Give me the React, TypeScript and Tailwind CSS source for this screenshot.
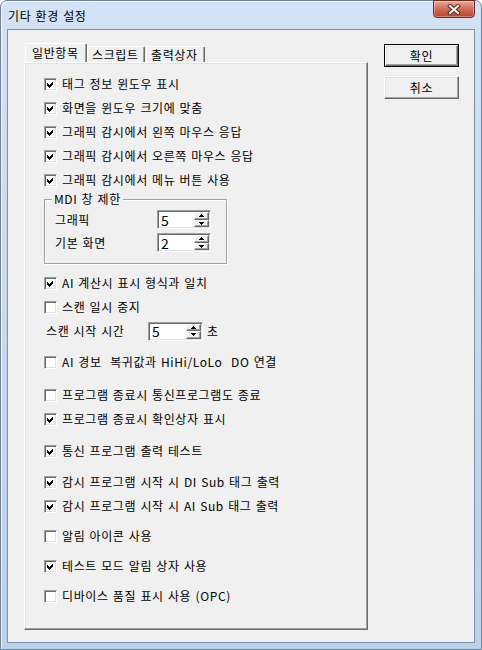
import React from "react";

const font = "font-['Noto_Sans_CJK_KR',_'Noto_Sans',_sans-serif] tracking-[0.6px] [word-spacing:1px]";

const Check = ({ checked }: { checked?: boolean }) => (
  <span className="flex h-[13px] w-[13px] shrink-0 items-center justify-center border border-t-[#a0a0a0] border-l-[#a0a0a0] border-b-white border-r-white bg-white shadow-[inset_1px_1px_0_#696969,inset_-1px_-1px_0_#e3e3e3]">
    {checked && (
      <svg width="9" height="9" viewBox="0 0 9 9" shapeRendering="crispEdges">
        <polygon points="1,3 3,5 7,1 7,4 3,8 1,6" fill="#000" />
      </svg>
    )}
  </span>
);

const Row = ({
  checked,
  label,
  className = "",
}: {
  checked?: boolean;
  label: string;
  className?: string;
}) => (
  <div className={`flex h-[24px] items-center ${className}`}>
    <Check checked={checked} />
    <span className="ml-[5px] whitespace-pre text-[12px] leading-[14px] text-black">{label}</span>
  </div>
);

const Arrow = ({ up }: { up?: boolean }) => (
  <svg width="5" height="3" viewBox="0 0 5 3" shapeRendering="crispEdges">
    {up ? <polygon points="2.5,0 5,3 0,3" fill="#000" /> : <polygon points="0,0 5,0 2.5,3" fill="#000" />}
  </svg>
);

const Spin = ({ value, width }: { value: string; width: string }) => (
  <div
    className={`flex h-[19px] ${width} border border-t-[#a0a0a0] border-l-[#a0a0a0] border-b-white border-r-white bg-white shadow-[inset_1px_1px_0_#696969,inset_-1px_-1px_0_#e3e3e3]`}
  >
    <span className="flex flex-1 items-center pl-[3px] text-[14px] leading-none text-black">{value}</span>
    <div className="flex w-[16px] flex-col py-[1px] pr-[1px]">
      <div className="flex flex-1 items-center justify-center border border-t-white border-l-white border-b-[#696969] border-r-[#696969] bg-[#f0f0f0] shadow-[inset_-1px_-1px_0_#a0a0a0]">
        <Arrow up />
      </div>
      <div className="flex flex-1 items-center justify-center border border-t-white border-l-white border-b-[#696969] border-r-[#696969] bg-[#f0f0f0] shadow-[inset_-1px_-1px_0_#a0a0a0]">
        <Arrow />
      </div>
    </div>
  </div>
);

const Button = ({ label, primary }: { label: string; primary?: boolean }) => (
  <div className={`h-[23px] w-[75px] ${primary ? "border border-black" : ""}`}>
    <div className="flex h-full w-full items-center justify-center border border-t-white border-l-white border-b-[#696969] border-r-[#696969] bg-[#f0f0f0] text-[12px] text-black shadow-[inset_-1px_-1px_0_#a0a0a0,inset_1px_1px_0_#e3e3e3]">
      {label}
    </div>
  </div>
);

const App = () => {
  return (
    <div className={`h-[650px] w-[482px] ${font}`}>
      <div className="flex h-full w-full flex-col rounded-t-[7px] border border-[#6f8299] bg-gradient-to-b from-[#d3e3f5] via-[#c6daf0] to-[#bad1ea] shadow-[inset_1px_1px_0_rgba(255,255,255,0.7)]">
        {/* title bar */}
        <div className="relative flex h-[28px] shrink-0 items-center pl-[7px] pt-[2px]">
          <span className="text-[12px] leading-none text-black">기타 환경 설정</span>
          <div className="absolute right-[6px] top-[-1px] flex h-[18px] w-[42px] items-center justify-center rounded-b-[4px] border border-[#6b2a1f] bg-gradient-to-b from-[#e8a898] via-[#d26a52] to-[#c0412a] shadow-[inset_0_0_0_1px_rgba(255,255,255,0.35)]">
            <svg width="14" height="11" viewBox="0 0 14 11">
              <path d="M3 2 L11 9 M11 2 L3 9" stroke="#5b2a22" strokeWidth="4" strokeLinecap="square" />
              <path d="M3 2 L11 9 M11 2 L3 9" stroke="#fff" strokeWidth="2" strokeLinecap="square" />
            </svg>
          </div>
        </div>

        {/* client */}
        <div className="mx-[6px] mb-[6px] flex-1 border border-[#7d90a8] bg-[#f0f0f0]">
          <div className="flex pl-[16px] pt-[14px]">
            {/* tab control */}
            <div className="w-[344px]">
              <div className="flex h-[18px] items-end pl-[1px]">
                <div className="relative z-10 flex h-[19px] w-[62px] items-start border-l border-t border-r border-l-white border-t-white border-r-[#696969] bg-[#f0f0f0] pl-[6px] pt-[2px] shadow-[inset_-1px_0_0_#a0a0a0] rounded-t-[2px]">
                  <span className="text-[12px] leading-[14px] text-black">일반항목</span>
                </div>
                <div className="flex h-[16px] w-[58px] items-start border-l border-t border-r border-l-white border-t-white border-r-[#696969] pl-[4px] pt-[1px] shadow-[inset_-1px_0_0_#a0a0a0] rounded-t-[2px]">
                  <span className="text-[12px] leading-[14px] text-black">스크립트</span>
                </div>
                <div className="ml-[1px] flex h-[16px] w-[59px] items-start border-l border-t border-r border-l-white border-t-white border-r-[#696969] pl-[4px] pt-[1px] shadow-[inset_-1px_0_0_#a0a0a0] rounded-t-[2px]">
                  <span className="text-[12px] leading-[14px] text-black">출력상자</span>
                </div>
              </div>
              <div className="h-[568px] border border-l-white border-t-white border-r-[#696969] border-b-[#696969] pl-[19px] pt-[9px] shadow-[inset_-1px_-1px_0_#a0a0a0,inset_1px_1px_0_#e3e3e3]">
                <Row checked label="태그 정보 윈도우 표시" />
                <Row checked label="화면을 윈도우 크기에 맞춤" />
                <Row checked label="그래픽 감시에서 왼쪽 마우스 응답" />
                <Row checked label="그래픽 감시에서 오른쪽 마우스 응답" />
                <Row checked label="그래픽 감시에서 메뉴 버튼 사용" />

                {/* MDI group */}
                <div className="relative mt-[7px] h-[65px] w-[183px] border border-[#a0a0a0] shadow-[inset_1px_1px_0_#fff,1px_1px_0_#fff]">
                  <span className="absolute left-[7px] top-[-8px] bg-[#f0f0f0] px-[2px] text-[12px] leading-[14px] text-black">
                    MDI 창 제한
                  </span>
                  <div className="flex flex-col gap-[4px] pl-[10px] pt-[10px]">
                    <div className="flex h-[19px] items-center">
                      <span className="w-[102px] text-[12px] leading-[14px] text-black">그래픽</span>
                      <Spin value="5" width="w-[54px]" />
                    </div>
                    <div className="flex h-[19px] items-center">
                      <span className="w-[102px] text-[12px] leading-[14px] text-black">기본 화면</span>
                      <Spin value="2" width="w-[54px]" />
                    </div>
                  </div>
                </div>

                <Row checked label="AI 계산시 표시 형식과 일치" className="mt-[7px]" />
                <Row label="스캔 일시 중지" />
                <div className="flex h-[24px] items-center pl-[2px]">
                  <span className="w-[102px] text-[12px] leading-[14px] text-black">스캔 시작 시간</span>
                  <Spin value="5" width="w-[55px]" />
                  <span className="ml-[4px] text-[12px] leading-[14px] text-black">초</span>
                </div>
                <Row label="AI 경보  복귀값과 HiHi/LoLo  DO 연결" className="mt-[7px]" />
                <Row label="프로그램 종료시 통신프로그램도 종료" className="mt-[9px]" />
                <Row checked label="프로그램 종료시 확인상자 표시" />
                <Row checked label="통신 프로그램 출력 테스트" className="mt-[8px]" />
                <Row checked label="감시 프로그램 시작 시 DI Sub 태그 출력" className="mt-[7px]" />
                <Row checked label="감시 프로그램 시작 시 AI Sub 태그 출력" />
                <Row label="알림 아이콘 사용" className="mt-[6px]" />
                <Row checked label="테스트 모드 알림 상자 사용" className="mt-[6px]" />
                <Row label="디바이스 품질 표시 사용 (OPC)" className="mt-[6px]" />
              </div>
            </div>

            {/* buttons */}
            <div className="ml-[16px] flex flex-col gap-[9px]">
              <Button label="확인" primary />
              <Button label="취소" />
            </div>
          </div>
        </div>
      </div>
    </div>
  );
};

export default App;
